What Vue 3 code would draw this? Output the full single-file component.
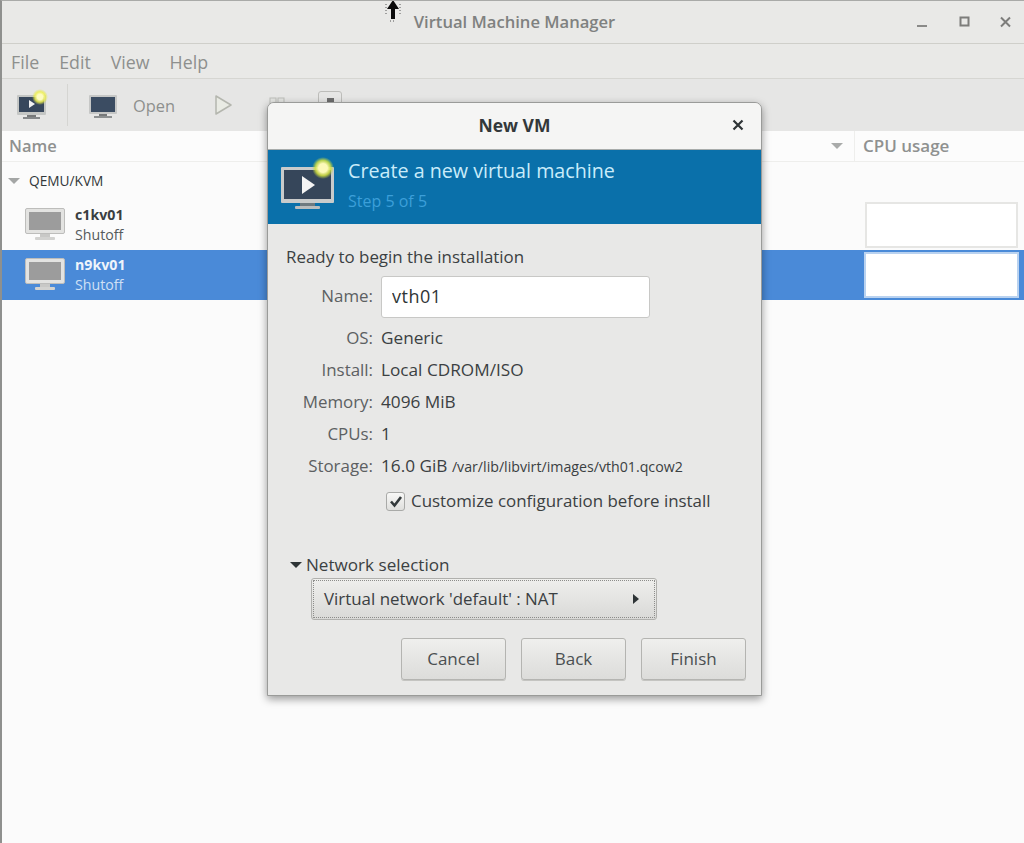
<script setup>
const guests = [
  { name: 'c1kv01', status: 'Shutoff', selected: false },
  { name: 'n9kv01', status: 'Shutoff', selected: true }
]

const summary = [
  { label: 'OS:', value: 'Generic' },
  { label: 'Install:', value: 'Local CDROM/ISO' },
  { label: 'Memory:', value: '4096 MiB' },
  { label: 'CPUs:', value: '1' },
  { label: 'Storage:', value: '16.0 GiB', path: '/var/lib/libvirt/images/vth01.qcow2' }
]
</script>

<template>
  <div class="window">
    <header class="titlebar">
      <span class="title">Virtual Machine Manager</span>
      <div class="wm-buttons">
        <svg class="wm-min" width="14" height="14" viewBox="0 0 14 14"><rect x="2" y="10" width="10" height="2" fill="#8a8a88" /></svg>
        <svg width="14" height="14" viewBox="0 0 14 14"><rect x="2.5" y="2.5" width="8" height="8" fill="none" stroke="#7d7d7b" stroke-width="2" /></svg>
        <svg width="14" height="14" viewBox="0 0 14 14"><path d="M2 2.5l9 9M11 2.5l-9 9" stroke="#7d7d7b" stroke-width="2" /></svg>
      </div>
    </header>

    <nav class="menubar">
      <span>File</span>
      <span>Edit</span>
      <span>View</span>
      <span>Help</span>
    </nav>

    <div class="toolbar">
      <svg class="tb-new" width="34" height="32" viewBox="0 0 34 32">
        <defs>
          <radialGradient id="glow-small">
            <stop offset="0.35" stop-color="#fdfbc0" />
            <stop offset="0.65" stop-color="#eef04e" stop-opacity="0.85" />
            <stop offset="1" stop-color="#dfe24a" stop-opacity="0" />
          </radialGradient>
        </defs>
        <rect x="1" y="6" width="29" height="20" rx="1" fill="#c4c6c4" />
        <rect x="3" y="8" width="25" height="15" fill="#37475c" />
        <path d="M13 11l6 4-6 4z" fill="#f2f2f2" />
        <rect x="11" y="26" width="9" height="2" fill="#77797a" />
        <rect x="7" y="28" width="17" height="2" fill="#85888a" />
        <circle cx="24" cy="8" r="8" fill="url(#glow-small)" />
      </svg>
      <div class="tb-sep"></div>
      <svg class="tb-open" width="30" height="26" viewBox="0 0 30 26">
        <rect x="1" y="1" width="28" height="19" rx="1" fill="#c6c7c6" />
        <rect x="3" y="3" width="24" height="15" fill="#3b4c62" />
        <rect x="11" y="20" width="8" height="2" fill="#77797a" />
        <rect x="6" y="22" width="18" height="2" fill="#8d9091" />
      </svg>
      <span class="tb-label">Open</span>
      <svg class="tb-play" width="20" height="22" viewBox="0 0 20 22">
        <path d="M2 2l15 9-15 9z" fill="#e9ebe4" stroke="#b4b6ae" stroke-width="1.5" stroke-linejoin="round" />
      </svg>
      <svg class="tb-pause" width="20" height="22" viewBox="0 0 20 22">
        <rect x="2" y="4" width="6" height="15" fill="#e4e5e2" stroke="#bcbdb9" />
        <rect x="10" y="4" width="6" height="15" fill="#e4e5e2" stroke="#bcbdb9" />
      </svg>
      <div class="tb-stop"><span></span></div>
    </div>

    <div class="list-head">
      <span class="col-name">Name</span>
      <svg class="sort" width="12" height="8" viewBox="0 0 12 8"><path d="M0 1h12L6 7z" fill="#a9abaa" /></svg>
      <span class="col-cpu">CPU usage</span>
    </div>

    <div class="list">
      <div class="group">
        <svg width="12" height="8" viewBox="0 0 12 8"><path d="M0 1h12L6 7z" fill="#a4a6a5" /></svg>
        <span>QEMU/KVM</span>
      </div>
      <div v-for="g in guests" :key="g.name" class="guest" :class="{ selected: g.selected }">
        <svg width="40" height="34" viewBox="0 0 40 34">
          <rect x="0.5" y="0.5" width="39" height="25" rx="1.5" fill="#e3e3e1" stroke="#bdbdbb" />
          <rect x="4" y="4" width="32" height="18" fill="#9c9c9c" />
          <rect x="15" y="26" width="10" height="3" fill="#c8c8c6" />
          <rect x="10" y="29" width="20" height="3" rx="1" fill="#d2d2d0" />
        </svg>
        <div class="guest-text">
          <strong>{{ g.name }}</strong>
          <span>{{ g.status }}</span>
        </div>
        <div class="cpu-box"></div>
      </div>
    </div>

    <section class="dialog">
      <div class="dlg-title">
        <span>New VM</span>
        <svg class="dlg-close" width="12" height="12" viewBox="0 0 12 12"><path d="M1.5 1.5l9 9M10.5 1.5l-9 9" stroke="#2e3436" stroke-width="2.2" /></svg>
      </div>

      <div class="banner">
        <svg class="banner-icon" width="56" height="52" viewBox="0 0 56 52">
          <defs>
            <radialGradient id="glow-big">
              <stop offset="0.4" stop-color="#fdf9b8" />
              <stop offset="0.7" stop-color="#d4e23e" stop-opacity="0.85" />
              <stop offset="1" stop-color="#b8d040" stop-opacity="0" />
            </radialGradient>
          </defs>
          <rect x="2" y="10" width="53" height="36" rx="1" fill="#c9cbcb" />
          <rect x="5" y="13" width="47" height="29" fill="#36465a" />
          <path d="M23 19l13 9-13 9z" fill="#f4f4f4" />
          <rect x="21" y="46" width="15" height="3" fill="#6f7a80" />
          <rect x="16" y="49" width="25" height="3" rx="1" fill="#b9bdbe" />
          <circle cx="44" cy="11" r="11" fill="url(#glow-big)" />
        </svg>
        <div class="banner-text">
          <div class="banner-title">Create a new virtual machine</div>
          <div class="banner-step">Step 5 of 5</div>
        </div>
      </div>

      <div class="dlg-body">
        <div class="ready">Ready to begin the installation</div>

        <div class="form">
          <label>Name:</label>
          <input class="name-input" value="vth01" />
          <template v-for="row in summary" :key="row.label">
            <label>{{ row.label }}</label>
            <div class="value">{{ row.value }} <small v-if="row.path">{{ row.path }}</small></div>
          </template>
        </div>

        <div class="customize">
          <span class="check">
            <svg width="14" height="14" viewBox="0 0 14 14"><path d="M2 7.5l3.5 4L12 3" fill="none" stroke="#33393b" stroke-width="2.6" /></svg>
          </span>
          <span class="customize-label">Customize configuration before install</span>
        </div>

        <div class="expander">
          <svg width="12" height="8" viewBox="0 0 12 8"><path d="M0 1h12L6 7z" fill="#2e3436" /></svg>
          <span>Network selection</span>
        </div>

        <div class="combo">
          <span>Virtual network 'default' : NAT</span>
          <svg width="8" height="12" viewBox="0 0 8 12"><path d="M1 1l6 5-6 5z" fill="#2e3436" /></svg>
        </div>

        <div class="actions">
          <button>Cancel</button>
          <button>Back</button>
          <button>Finish</button>
        </div>
      </div>
    </section>

    <svg class="cursor" width="18" height="24" viewBox="0 0 18 24">
      <path d="M9 1L3 10h4v10h4V10h4z" fill="#0b0b0b" />
      <path d="M2 5v10M16 5v10M6 22h6" stroke="#555" stroke-width="1" stroke-dasharray="1 2" fill="none" />
    </svg>
  </div>
</template>

<style scoped>
.window {
  position: relative;
  width: 1024px;
  height: 843px;
  box-sizing: border-box;
  border-top: 1px solid #a9aaa8;
  border-left: 2px solid #8f908e;
  background: #fbfbfb;
  display: flex;
  flex-direction: column;
  overflow: hidden;
  font-family: "Open Sans", "Noto Sans", sans-serif;
  font-size: 16.9px;
  color: #3b4042;
}

.titlebar {
  height: 43px;
  flex: none;
  display: flex;
  align-items: center;
  justify-content: center;
  position: relative;
  background: #e9e9e7;
  border-bottom: 1px solid #cfcfca;
  box-sizing: border-box;
}

.title {
  margin: 0 0 2px 3px;
  font-weight: 600;
  font-size: 16.6px;
  color: #7f8180;
}

.wm-buttons {
  position: absolute;
  right: 11px;
  top: 14px;
  display: flex;
  gap: 27px;
}

.wm-min {
  margin-right: 2px;
}

.menubar {
  height: 35px;
  flex: none;
  box-sizing: border-box;
  display: flex;
  align-items: center;
  gap: 20px;
  padding: 2px 0 0 9px;
  background: #e9e9e7;
  border-bottom: 1px solid #d6d6d2;
  color: #8e908e;
  font-size: 17.8px;
}

.toolbar {
  height: 52px;
  flex: none;
  display: flex;
  align-items: center;
  background: #e6e6e5;
  color: #8e908e;
}

.tb-new {
  margin-left: 14px;
}

.tb-sep {
  width: 1px;
  height: 42px;
  margin-left: 17px;
  background: #d5d5d2;
}

.tb-open {
  margin: 3px 0 0 20px;
}

.tb-label {
  margin-left: 15px;
  font-size: 16.4px;
}

.tb-play {
  margin-left: 39px;
}

.tb-pause {
  margin-left: 34px;
}

.tb-stop {
  margin-left: 30px;
  width: 24px;
  height: 28px;
  box-sizing: border-box;
  border: 1px solid #bdbdba;
  border-radius: 3px;
  display: flex;
  justify-content: center;
  padding-top: 6px;
}

.tb-stop span {
  width: 7px;
  height: 8px;
  background: #6e6e6e;
}

.list-head {
  height: 31px;
  flex: none;
  box-sizing: border-box;
  display: flex;
  align-items: center;
  border-bottom: 1px solid #eeeeec;
  background: #fcfcfc;
  color: #8f9190;
  font-weight: 600;
  font-size: 16.5px;
}

.col-name {
  margin: 0 0 2px 7px;
}

.sort {
  margin-left: auto;
}

.col-cpu {
  width: 170px;
  box-sizing: border-box;
  margin-left: 11px;
  padding: 0 0 2px 8px;
  line-height: 29px;
  border-left: 1px solid #eeeeec;
  font-size: 17px;
}

.list {
  flex: 1;
}

.group {
  height: 38px;
  display: flex;
  align-items: center;
  gap: 9px;
  padding-left: 6px;
  font-size: 13.7px;
  color: #33383a;
}

.group span {
  margin-bottom: 2px;
}

.guest {
  height: 50px;
  box-sizing: border-box;
  display: flex;
  align-items: center;
  padding: 0 6px 0 23px;
  color: #3a3f41;
}

.guest-text {
  margin: 0 0 2px 10px;
  display: flex;
  flex-direction: column;
  gap: 1px;
  font-size: 14.2px;
  line-height: 19px;
}

.guest-text strong {
  font-weight: 700;
}

.guest-text span {
  color: #555a5c;
}

.guest.selected {
  background: #4a8ad8;
}

.guest.selected .guest-text strong {
  color: #eef4fb;
}

.guest.selected .guest-text span {
  color: #cfe0f5;
}

.cpu-box {
  width: 153px;
  height: 46px;
  margin-left: auto;
  box-sizing: border-box;
  background: #fff;
  border: 2px solid #e6e6e4;
}

.guest.selected .cpu-box {
  width: 155px;
  margin-right: -1px;
  border-color: #b9d2f0;
}

.dialog {
  position: absolute;
  left: 265px;
  top: 101px;
  width: 495px;
  height: 594px;
  box-sizing: border-box;
  border: 1px solid #9a9b99;
  border-radius: 7px 7px 0 0;
  background: #e8e8e7;
  box-shadow: 0 3px 9px rgba(0, 0, 0, 0.4);
  display: flex;
  flex-direction: column;
  overflow: hidden;
}

.dlg-title {
  height: 47px;
  flex: none;
  box-sizing: border-box;
  padding-bottom: 3px;
  display: flex;
  align-items: center;
  justify-content: center;
  position: relative;
  background: #f5f5f4;
  border-bottom: 1px solid #a8acab;
  font-weight: 700;
  font-size: 17.5px;
  color: #33383a;
}

.dlg-close {
  position: absolute;
  right: 17px;
  top: 16px;
}

.banner {
  height: 74px;
  flex: none;
  display: flex;
  align-items: center;
  padding-left: 11px;
  background: #0a70aa;
}

.banner-icon {
  margin-top: -8px;
}

.banner-text {
  margin: -7px 0 0 13px;
}

.banner-title {
  font-size: 19.7px;
  line-height: 28px;
  color: #c9ecfa;
}

.banner-step {
  margin-top: 6px;
  font-size: 16px;
  line-height: 20px;
  color: #3c9fd9;
}

.dlg-body {
  flex: 1;
  display: flex;
  flex-direction: column;
  padding: 23px 15px 14px 18px;
}

.ready {
  line-height: 20px;
}

.form {
  margin-top: 9px;
  display: grid;
  grid-template-columns: 87px 1fr;
  column-gap: 8px;
  grid-auto-rows: 32px;
  grid-template-rows: 46px;
  align-items: center;
}

.form label {
  text-align: right;
  color: #5c6062;
  white-space: nowrap;
  padding-bottom: 2px;
}

.form label:first-child {
  align-self: start;
  line-height: 40px;
}

.name-input {
  width: 269px;
  height: 42px;
  align-self: start;
  box-sizing: border-box;
  padding: 0 10px 2px;
  border: 1px solid #c8c8c6;
  border-radius: 3px;
  background: #fff;
  font: inherit;
  font-size: 18px;
  letter-spacing: 0.5px;
  color: #2e3436;
  outline: none;
}

.value {
  white-space: nowrap;
  font-size: 17.2px;
  padding-bottom: 2px;
}

.value small {
  font-size: 14.2px;
}

.customize {
  margin-top: 3px;
  height: 32px;
  display: flex;
  align-items: center;
  margin-left: 100px;
  gap: 6px;
}

.customize-label {
  padding-bottom: 2px;
}

.check {
  width: 19px;
  height: 19px;
  box-sizing: border-box;
  border: 1px solid #a9aaa8;
  border-radius: 3px;
  background: linear-gradient(#f8f8f7, #dfdfdd);
  display: flex;
  align-items: center;
  justify-content: center;
}

.expander {
  margin-top: 38px;
  height: 20px;
  display: flex;
  align-items: center;
  gap: 4px;
  margin-left: 4px;
  font-size: 17.1px;
}

.expander span {
  padding-bottom: 2px;
}

.combo {
  margin: 3px 0 0 25px;
  width: 346px;
  height: 42px;
  box-sizing: border-box;
  display: flex;
  align-items: center;
  justify-content: space-between;
  padding: 0 16px 0 12px;
  border: 1px solid #b0b0ad;
  outline: 1px dotted #8c8c8a;
  outline-offset: -3px;
  border-radius: 3px;
  background: linear-gradient(#efefed, #d9d9d7);
}

.combo span {
  padding-bottom: 2px;
}

.actions {
  margin-top: 18px;
  display: flex;
  justify-content: flex-end;
  gap: 15px;
}

.actions button {
  width: 105px;
  height: 42px;
  padding: 0 0 2px;
  border: 1px solid #b4b4b1;
  border-radius: 3px;
  background: linear-gradient(#efefed, #dcdcda);
  font: inherit;
  font-size: 17px;
  color: #4a4f51;
  box-shadow: 0 1px 0 #c4c4c1;
}

.cursor {
  position: absolute;
  left: 382px;
  top: -2px;
}
</style>

<style>
html, body {
  margin: 0;
  background: #fbfbfb;
}
</style>
